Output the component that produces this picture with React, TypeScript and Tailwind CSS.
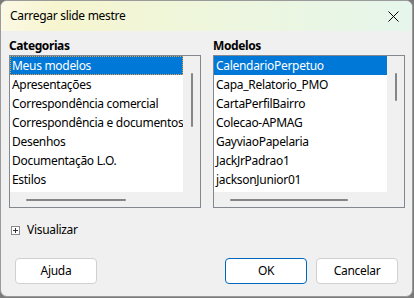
import { useState } from "react";

const categorias = [
  "Meus modelos",
  "Apresentações",
  "Correspondência comercial",
  "Correspondência e documentos pessoais",
  "Desenhos",
  "Documentação L.O.",
  "Estilos",
];

const modelos = [
  "CalendarioPerpetuo",
  "Capa_Relatorio_PMO",
  "CartaPerfilBairro",
  "Colecao-APMAG",
  "GayviaoPapelaria",
  "JackJrPadrao1",
  "jacksonJunior01",
];

function ListBox({
  items,
  selected,
  focused,
  vThumb,
  hThumb,
}: {
  items: string[];
  selected: number;
  focused?: boolean;
  vThumb: [number, number];
  hThumb: [number, number];
}) {
  return (
    <div className="relative h-[153px] border border-[#828790] bg-[#f0f0f0]">
      <div className="h-[136px] w-[173px] overflow-hidden bg-white">
        {items.map((item, i) => (
          <div
            key={item}
            className={
              i === selected
                ? "h-[19px] overflow-hidden whitespace-nowrap bg-[#0078d7] pl-[2px] leading-[19px] text-white" +
                  (focused ? " outline-1 outline-dotted outline-[#e8a040] -outline-offset-1" : "")
                : "h-[19px] overflow-hidden whitespace-nowrap pl-[2px] leading-[19px] text-black"
            }
          >
            {item}
          </div>
        ))}
      </div>
      {/* scrollbar thumbs */}
      <div
        className="absolute right-[7px] w-[2px] rounded bg-[#858585]"
        style={{ top: vThumb[0], height: vThumb[1] }}
      />
      <div
        className="absolute bottom-[6px] h-[2px] rounded bg-[#858585]"
        style={{ left: hThumb[0], width: hThumb[1] }}
      />
    </div>
  );
}

function Button({ label, primary }: { label: string; primary?: boolean }) {
  return (
    <button
      className={
        primary
          ? "h-[26px] w-[82px] rounded-[4px] border border-[#0067c0] bg-white text-[12px] text-black"
          : "h-[26px] w-[82px] rounded-[4px] border border-[#d0d0d0] bg-white text-[12px] text-black"
      }
    >
      {label}
    </button>
  );
}

export default function App() {
  const [open] = useState(false);

  return (
    <div
      className="h-[298px] w-[414px] overflow-hidden bg-[#7a7a7a] text-[12px] tracking-[-0.3px]"
      style={{ fontFamily: '"Noto Sans", "Liberation Sans", sans-serif' }}
    >
      <div className="flex h-[297px] w-[413px] flex-col overflow-hidden rounded-[7px] border border-[#9a9a9a] bg-[#f0f0f0]">
        {/* title bar */}
        <div className="flex h-[30px] shrink-0 items-center justify-between bg-[linear-gradient(90deg,#fbf8e4_0%,#f6f5cf_14%,#eef6dc_50%,#e6f6ec_100%)] pl-[9px] pr-[13px]">
          <span className="text-[12px] text-black">Carregar slide mestre</span>
          <svg width="11" height="11" viewBox="0 0 11 11" className="text-black">
            <path d="M0.5 0.5 L10.5 10.5 M10.5 0.5 L0.5 10.5" stroke="currentColor" strokeWidth="1" />
          </svg>
        </div>

        {/* body */}
        <div className="flex flex-1 flex-col px-[8px] pt-[8px]">
          <div className="grid grid-cols-[192px_192px] gap-[12px]">
            <div>
              <div className="mb-[2px] h-[14px] font-bold leading-[14px] tracking-[-0.4px]">Categorias</div>
              <ListBox items={categorias} selected={0} focused vThumb={[17, 54]} hThumb={[16, 100]} />
            </div>
            <div>
              <div className="mb-[2px] h-[14px] font-bold leading-[14px] tracking-[-0.4px]">Modelos</div>
              <ListBox items={modelos} selected={0} vThumb={[17, 28]} hThumb={[16, 118]} />
            </div>
          </div>

          <div className="mt-[13px] flex items-center gap-[7px] pl-[2px]">
            <span className="flex h-[9px] w-[9px] items-center justify-center border border-[#8a8a8a] bg-white">
              <svg width="7" height="7" viewBox="0 0 7 7">
                <path d="M1 3.5 H6 M3.5 1 V6" stroke="#333" strokeWidth="1" />
              </svg>
            </span>
            <span>{open ? "Ocultar" : "Visualizar"}</span>
          </div>

          <div className="mt-[19px] flex items-center pl-[6px] pr-[6px]">
            <Button label="Ajuda" />
            <div className="flex-1" />
            <div className="flex gap-[9px]">
              <Button label="OK" primary />
              <Button label="Cancelar" />
            </div>
          </div>
        </div>
      </div>
    </div>
  );
}
